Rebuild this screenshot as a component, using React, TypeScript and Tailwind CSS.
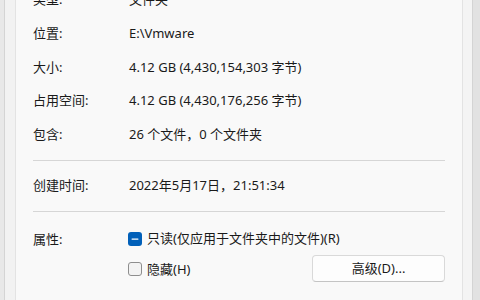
import { Minus } from "lucide-react";

const font = { fontFamily: '"Noto Sans", "Noto Sans CJK SC", sans-serif' };

type RowProps = { label: string; value: string; className?: string };

function InfoRow({ label, value, className = "h-[33.75px]" }: RowProps) {
  return (
    <div className={`flex items-center ${className}`}>
      <div className="w-[96px] shrink-0">{label}</div>
      <div className="whitespace-nowrap">{value}</div>
    </div>
  );
}

export default function App() {
  return (
    <div
      className="flex h-[300px] w-[480px] overflow-hidden bg-[#e6e6e6] text-[13px] text-[#1a1a1a]"
      style={font}
    >
      {/* dialog edge on the left */}
      <div className="w-[5px] shrink-0 border-r border-[#d4d4d4] bg-[#e8e8e8]" />
      <div className="w-[10px] shrink-0 bg-[#f2f2f2]" />

      {/* tab page */}
      <div className="flex min-w-0 flex-1 flex-col border-x border-[#e3e3e3] bg-[#f9f9f9] pl-[17px] pr-[17px]">
        <div className="mt-[-17px]">
          <InfoRow label="类型:" value="文件夹" />
          <InfoRow label="位置:" value="E:\Vmware" />
          <InfoRow label="大小:" value="4.12 GB (4,430,154,303 字节)" />
          <InfoRow label="占用空间:" value="4.12 GB (4,430,176,256 字节)" />
          <InfoRow label="包含:" value="26 个文件，0 个文件夹" />
        </div>

        <div className="mt-[8px] border-t border-[#d6d6d6]" />
        <InfoRow label="创建时间:" value="2022年5月17日，21:51:34" className="h-[50px]" />
        <div className="border-t border-[#d6d6d6]" />

        <div className="flex pt-[18px]">
          <div className="w-[95px] shrink-0 leading-[18px]">属性:</div>
          <div className="flex min-w-0 flex-1 flex-col">
            <label className="flex h-[18px] items-center gap-[5px] whitespace-nowrap">
              <span className="flex size-[14px] items-center justify-center rounded-[3px] bg-[#0160b9]">
                <Minus className="size-[10px] text-white" strokeWidth={3} />
              </span>
              只读(仅应用于文件夹中的文件)(R)
            </label>
            <div className="mt-[7px] flex items-center justify-between">
              <label className="flex items-center gap-[5px] whitespace-nowrap pt-[2px]">
                <span className="size-[14px] rounded-[3px] border border-[#8e8e8e] bg-[#f3f3f3]" />
                隐藏(H)
              </label>
              <button
                type="button"
                className="h-[27px] w-[133px] rounded-[4px] border border-[#d9d9d9] border-b-[#c4c4c4] bg-[#fdfdfd] text-[13px] text-[#1a1a1a]"
              >
                高级(D)...
              </button>
            </div>
          </div>
        </div>
      </div>

      {/* dialog edge on the right */}
      <div className="w-[10px] shrink-0 border-r border-[#d4d4d4] bg-[#f4f4f4]" />
      <div className="w-[7px] shrink-0 bg-[#e2e2e2]" />
    </div>
  );
}
